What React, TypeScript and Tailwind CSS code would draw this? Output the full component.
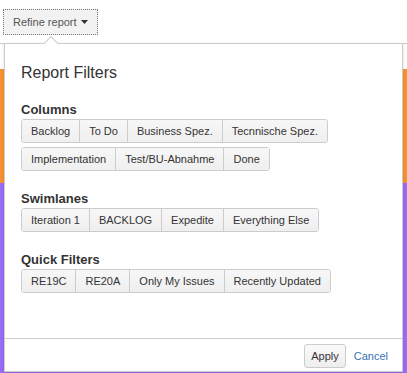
import React from 'react';

const FONT = { fontFamily: '"Liberation Sans", Arial, sans-serif' };

interface FilterGroupProps {
  title: string;
  rows: string[][];
  className?: string;
}

const FilterGroup: React.FC<FilterGroupProps> = ({ title, rows, className }) => (
  <div className={className}>
    <h3 className="text-[13px] font-bold leading-[18px] text-[#333]">{title}</h3>
    <div className="flex flex-col gap-[4px]">
      {rows.map((row, i) => (
        <div key={i} className="flex">
          <div className="inline-flex rounded-[3px] border border-[#cccccc] overflow-hidden">
            {row.map((label, j) => (
              <button
                key={label}
                className={`h-[22px] px-[9px] text-[11px] leading-[22px] text-[#333] bg-gradient-to-b from-[#f7f7f7] to-[#efefef] ${
                  j > 0 ? 'border-l border-[#cccccc]' : ''
                }`}
              >
                {label}
              </button>
            ))}
          </div>
        </div>
      ))}
    </div>
  </div>
);

export default function App() {
  return (
    <div className="relative w-[407px] h-[373px] overflow-hidden bg-white flex flex-col" style={FONT}>
      {/* page behind the popup */}
      <div className="h-[44px] border-b border-[#cccccc] pl-[3px] pt-[9px]">
        <button className="h-[26px] w-[95px] flex items-center gap-[4px] pl-[9px] border border-dotted border-[#777] bg-[#f2f2f2] text-[11px] text-[#555]">
          <span>Refine report</span>
          <svg width="7" height="4" viewBox="0 0 7 4">
            <path d="M0 0h7L3.5 4z" fill="#333" />
          </svg>
        </button>
      </div>
      <div className="h-[25px]" />
      <div className="h-[114px] bg-[#f79232]" />
      <div className="flex-1 bg-[#9a6cf6]" />

      {/* popup */}
      <div className="absolute left-[4px] top-[43px] w-[399px] h-[329px] border border-[#cccccc] bg-white shadow-[0_1px_3px_rgba(0,0,0,0.15)] flex flex-col">
        <div className="absolute left-[41px] top-[-6px] w-[10px] h-[10px] rotate-45 bg-white border-l border-t border-[#cccccc]" />
        <div className="flex-1 px-[16px] pt-[19px]">
          <h2 className="text-[16px] leading-[20px] text-[#333]">Report Filters</h2>
          <FilterGroup
            className="mt-[18px]"
            title="Columns"
            rows={[
              ['Backlog', 'To Do', 'Business Spez.', 'Tecnnische Spez.'],
              ['Implementation', 'Test/BU-Abnahme', 'Done'],
            ]}
          />
          <FilterGroup
            className="mt-[19px]"
            title="Swimlanes"
            rows={[['Iteration 1', 'BACKLOG', 'Expedite', 'Everything Else']]}
          />
          <FilterGroup
            className="mt-[19px]"
            title="Quick Filters"
            rows={[['RE19C', 'RE20A', 'Only My Issues', 'Recently Updated']]}
          />
        </div>
        <div className="h-[33px] border-t border-[#cccccc] flex items-start justify-end gap-[8px] pt-[5px] pr-[14px]">
          <button className="h-[24px] px-[6px] rounded-[3px] border border-[#cccccc] bg-gradient-to-b from-[#fafafa] to-[#eeeeee] text-[11px] text-[#333]">
            Apply
          </button>
          <a href="#" className="h-[24px] leading-[24px] text-[11px] text-[#3572b0]">
            Cancel
          </a>
        </div>
      </div>
    </div>
  );
}
